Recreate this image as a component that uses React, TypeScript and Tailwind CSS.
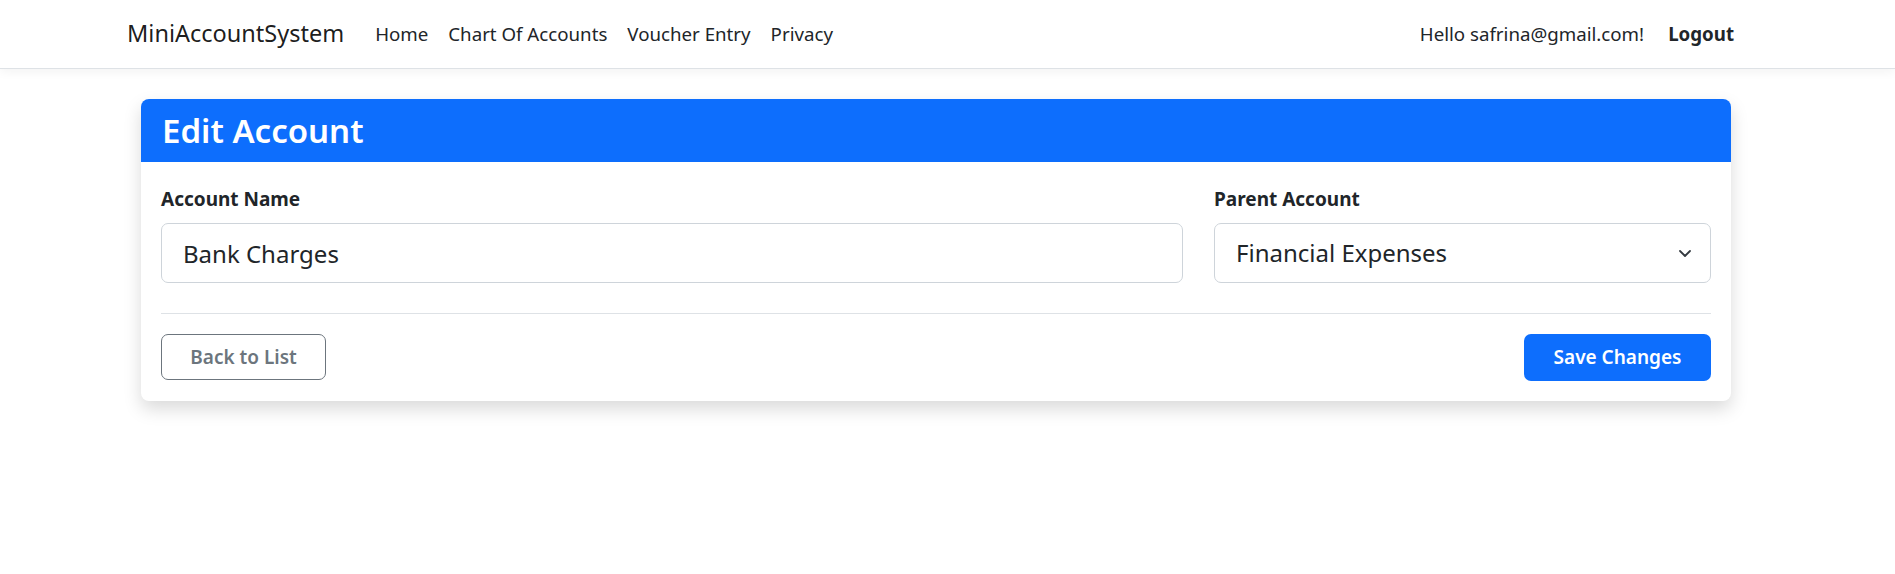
import React, { useState } from "react";

const parents = ["Financial Expenses", "Operating Expenses", "Assets", "Liabilities"];

const App = () => {
    const [name, setName] = useState("Bank Charges");
    const [parent, setParent] = useState("Financial Expenses");

    return (
        <div className="min-h-screen bg-white text-[#212529] font-['Noto_Sans',sans-serif]">
            <nav className="h-[69px] flex items-center justify-between pl-[127px] pr-[161px] bg-white border-b border-[#dee2e6] shadow-[0_3px_10px_rgba(0,0,0,0.05)]">
                <div className="flex items-center">
                    <a href="#" className="text-[23.5px] text-black/90 mr-[31px] leading-none">MiniAccountSystem</a>
                    <ul className="flex items-center gap-[20px] text-[18.7px] text-[#212529]">
                        <li><a href="#">Home</a></li>
                        <li><a href="#">Chart Of Accounts</a></li>
                        <li><a href="#">Voucher Entry</a></li>
                        <li><a href="#">Privacy</a></li>
                    </ul>
                </div>
                <div className="flex items-center gap-[24px] text-[18.7px]">
                    <span>Hello safrina@gmail.com!</span>
                    <button className="font-bold">Logout</button>
                </div>
            </nav>

            <main className="pt-[30px] pl-[141px] pr-[164px]">
                <div className="rounded-[8px] bg-white shadow-[0_8px_18px_rgba(0,0,0,0.15)] overflow-hidden">
                    <div className="bg-[#0d6efd] h-[63px] flex items-center px-[21px]">
                        <h3 className="text-white text-[33px] font-semibold">Edit Account</h3>
                    </div>
                    <form className="px-[20px] pt-[23px] pb-[20px]">
                        <div className="flex gap-[31px]">
                            <div className="flex-1">
                                <label className="block text-[19px] font-bold mb-[9px] leading-[29px]">Account Name</label>
                                <input
                                    value={name}
                                    onChange={(e) => setName(e.target.value)}
                                    className="w-full h-[60px] px-[21px] text-[24px] border border-[#ced4da] rounded-[7px] outline-none"
                                />
                            </div>
                            <div className="w-[497px]">
                                <label className="block text-[19px] font-bold mb-[9px] leading-[29px]">Parent Account</label>
                                <div className="relative">
                                    <select
                                        value={parent}
                                        onChange={(e) => setParent(e.target.value)}
                                        className="w-full h-[60px] pl-[21px] pr-[50px] text-[24px] border border-[#ced4da] rounded-[7px] bg-white appearance-none outline-none"
                                    >
                                        {parents.map((p) => (
                                            <option key={p} value={p}>{p}</option>
                                        ))}
                                    </select>
                                    <svg className="absolute right-[18px] top-[22px] pointer-events-none" width="16" height="16" viewBox="0 0 16 16" fill="none" stroke="#343a40" strokeWidth="1.8" strokeLinecap="round" strokeLinejoin="round">
                                        <path d="M3 6l5 5 5-5" />
                                    </svg>
                                </div>
                            </div>
                        </div>
                        <hr className="mt-[30px] mb-[20px] border-t border-[#dee2e6]" />
                        <div className="flex justify-between">
                            <button type="button" className="h-[46px] w-[165px] border border-[#6c757d] rounded-[7px] text-[#6c757d] text-[19px] font-semibold">Back to List</button>
                            <button type="submit" className="h-[47px] w-[187px] bg-[#0d6efd] rounded-[7px] text-white text-[19px] font-semibold">Save Changes</button>
                        </div>
                    </form>
                </div>
            </main>
        </div>
    );
};

export default App;
